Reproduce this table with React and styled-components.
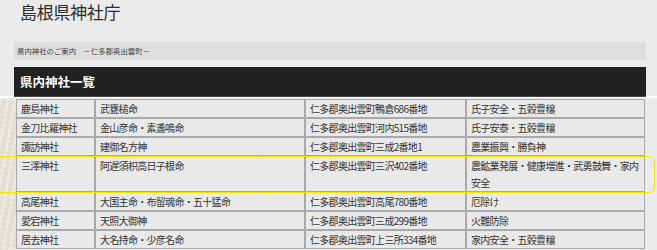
import React from 'react';
import styled, { createGlobalStyle } from 'styled-components';

const GlobalStyle = createGlobalStyle`
  body {
    margin: 0;
    background: #ebebeb;
    font-family: 'Noto Sans CJK JP', 'Noto Sans', sans-serif;
    color: #333;
  }
`;

const Page = styled.div`
  width: 657px;
  height: 250px;
  overflow: hidden;
  background: #ebebeb;
`;

const Masthead = styled.header`
  height: 98px;
  border-bottom: 2px solid #fff;
  box-sizing: border-box;
`;

const Title = styled.h1`
  margin: 0 0 20px 0;
  padding: 3px 0 0 20px;
  height: 19px;
  font-size: 17px;
  line-height: 18px;
  font-weight: 400;
  letter-spacing: -0.3px;
  color: #2b2b2b;
`;

const Breadcrumb = styled.div`
  margin: 0 11px 0 14px;
  height: 18px;
  padding-left: 3px;
  background: #dedede;
  font-size: 7.4px;
  line-height: 18px;
  color: #444;
`;

const SectionHeader = styled.h2`
  margin: 7px 11px 0 14px;
  height: 29px;
  padding-left: 6px;
  background: #222;
  border-bottom: 1px solid #444;
  font-size: 12.5px;
  line-height: 30px;
  font-weight: 700;
  color: #fff;
`;

const Main = styled.div`
  display: flex;
  padding-top: 1px;
`;

const Side = styled.div`
  width: 16px;
  flex: none;
  background-color: #e6e1d7;
  background-image:
    repeating-linear-gradient(100deg, rgba(255,255,255,0.35) 0 2px, transparent 2px 7px),
    repeating-linear-gradient(10deg, rgba(190,180,160,0.18) 0 1px, transparent 1px 5px);
`;

const TableWrap = styled.div`
  position: relative;
  width: 629px;
  flex: none;
`;

const Table = styled.table`
  width: 100%;
  border-collapse: separate;
  border-spacing: 0;
  table-layout: fixed;
  font-size: 10px;
  letter-spacing: -0.7px;
`;

const Cell = styled.td`
  width: ${p => p.$w}px;
  padding: 0 4px;
  border: 1px solid #a9a9a9;
  background: #e9e9e9;
  line-height: 17px;
  vertical-align: top;
  color: #333;
  box-sizing: border-box;
`;

const Highlight = styled.div`
  position: absolute;
  left: -22px;
  right: -10px;
  top: 57px;
  height: 37px;
  border: 1.5px solid #f2e600;
  border-radius: 6px;
  box-sizing: border-box;
  pointer-events: none;
`;

const widths = [79, 210, 161, 179];

const shrines = [
  ['鹿島神社', '武甕槌命', '仁多郡奥出雲町鴨倉686番地', '氏子安全・五穀豊穣'],
  ['金刀比羅神社', '金山彦命・素盞嗚命', '仁多郡奥出雲町河内515番地', '氏子安泰・五穀豊穣'],
  ['諏訪神社', '建御名方神', '仁多郡奥出雲町三成2番地1', '農業振興・勝負神'],
  ['三澤神社', '阿遅須枳高日子根命', '仁多郡奥出雲町三沢402番地', '農鉱業発展・健康増進・武勇鼓舞・家内安全'],
  ['高尾神社', '大国主命・布留魂命・五十猛命', '仁多郡奥出雲町高尾780番地', '厄除け'],
  ['愛宕神社', '天照大御神', '仁多郡奥出雲町三成299番地', '火難防除'],
  ['居去神社', '大名持命・少彦名命', '仁多郡奥出雲町上三所334番地', '家内安全・五穀豊穣'],
];

export default function App() {
  return (
    <Page>
      <GlobalStyle />
      <Masthead>
        <Title>島根県神社庁</Title>
        <Breadcrumb>県内神社のご案内　－仁多郡奥出雲町－</Breadcrumb>
        <SectionHeader>県内神社一覧</SectionHeader>
      </Masthead>
      <Main>
        <Side />
        <TableWrap>
          <Table>
            <tbody>
              {shrines.map((row, i) => (
                <tr key={i}>
                  {row.map((text, j) => (
                    <Cell key={j} $w={widths[j]}>{text}</Cell>
                  ))}
                </tr>
              ))}
            </tbody>
          </Table>
          <Highlight />
        </TableWrap>
      </Main>
    </Page>
  );
}
